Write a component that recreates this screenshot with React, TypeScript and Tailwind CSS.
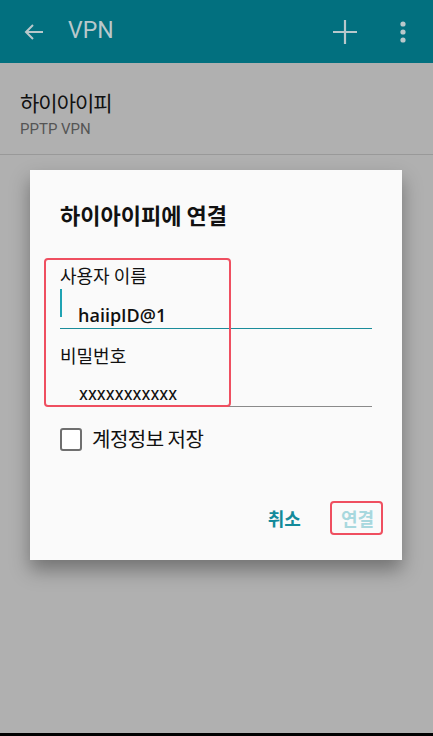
import React from 'react';

const kr = { fontFamily: '"Noto Sans CJK KR", "Noto Sans", sans-serif' };
const latin = { fontFamily: 'Roboto, "Noto Sans CJK KR", sans-serif' };
const field = { fontFamily: '"Open Sans", "Noto Sans CJK KR", sans-serif' };

const TopBar: React.FC = () => (
  <div className="h-[63px] bg-[#02707f] flex items-center text-[#b9c8cb]" style={latin}>
    <svg width="20" height="20" viewBox="0 0 20 20" className="ml-[24px]" fill="none" stroke="currentColor" strokeWidth="2">
      <path d="M19 10H2M9 3l-7 7 7 7" />
    </svg>
    <span className="ml-[24px] text-[23px]">VPN</span>
    <div className="flex-1" />
    <svg width="24" height="24" viewBox="0 0 24 24" fill="none" stroke="currentColor" strokeWidth="2.2">
      <path d="M12 0v24M0 12h24" />
    </svg>
    <svg width="8" height="22" viewBox="0 0 8 22" className="ml-[42px] mr-[26px]" fill="currentColor">
      <circle cx="4" cy="3" r="2.6" />
      <circle cx="4" cy="11" r="2.6" />
      <circle cx="4" cy="19" r="2.6" />
    </svg>
  </div>
);

export default function App() {
  return (
    <div className="w-[433px] h-[736px] bg-[#b0b0b0] flex flex-col overflow-hidden">
      <TopBar />

      <div className="h-[92px] border-b border-[#999999] px-[20px] pt-[25px]">
        <div className="text-[21px] leading-[28px] tracking-[-1px] text-[#111111]" style={kr}>하이아이피</div>
        <div className="text-[15px] leading-[18px] text-[#555555] mt-[4px]" style={latin}>PPTP VPN</div>
      </div>

      <div className="mt-[15px] ml-[30px] w-[372px] h-[390px] bg-[#fafafa] shadow-[0_10px_18px_rgba(0,0,0,0.35)] relative px-[30px] pt-[30px]" style={kr}>
        <div className="text-[22px] leading-[28px] font-bold text-[#111111]">하이아이피에 연결</div>

        <div className="mt-[34px]">
          <div className="text-[18px] leading-[26px] text-[#111111]">사용자 이름</div>
          <div className="h-[41px] border-b border-[#1a8c9a] flex items-end pb-[2px] relative">
            <div className="absolute left-0 top-[1px] w-[2px] h-[28px] bg-[#1fa3b3]" />
            <span className="ml-[18px] text-[18px] leading-[22px] font-semibold text-[#111111]" style={field}>haiipID@1</span>
          </div>

          <div className="mt-[13px] text-[18px] leading-[26px] text-[#111111]">비밀번호</div>
          <div className="h-[39px] border-b border-[#8a8a8a] flex items-end pb-[2px]">
            <span className="ml-[19px] text-[18px] leading-[20px] text-[#111111]" style={latin}>xxxxxxxxxxx</span>
          </div>
        </div>

        <div className="mt-[20px] flex items-center">
          <div className="w-[22px] h-[23px] border-2 border-[#6f6f6f] rounded-[3px] bg-white" />
          <span className="ml-[10px] text-[20px] leading-[24px] tracking-[-0.5px] text-[#111111]">계정정보 저장</span>
        </div>

        <div className="mt-[56px] flex justify-end items-center">
          <span className="text-[18px] leading-[22px] font-bold text-[#138a9a]">취소</span>
          <span className="ml-[40px] mr-[-2px] text-[18px] leading-[22px] font-bold text-[#a8d8de]">연결</span>
        </div>

        {/* red annotation boxes */}
        <div className="absolute left-[14px] top-[88px] w-[187px] h-[149px] border-2 border-[#ef4f60] rounded-[4px] pointer-events-none" />
        <div className="absolute left-[300px] top-[331px] w-[53px] h-[34px] border-2 border-[#ef4f60] rounded-[4px] pointer-events-none" />
      </div>

      <div className="flex-1" />
      <div className="h-[3px] bg-black" />
    </div>
  );
}
